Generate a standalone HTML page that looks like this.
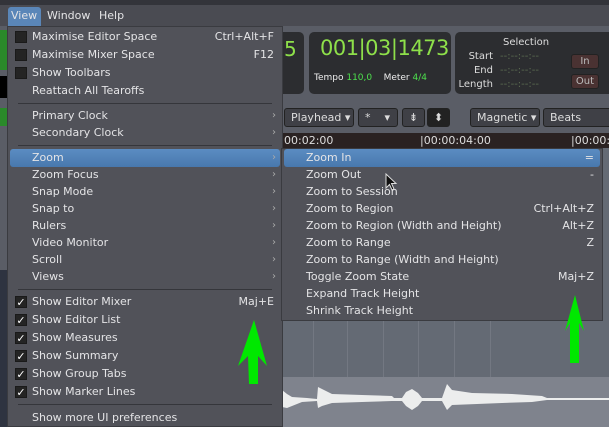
<!DOCTYPE html>
<html><head><meta charset="utf-8"><style>
*{margin:0;padding:0;box-sizing:border-box}
body{width:609px;height:427px;overflow:hidden;background:#5a5d66;font-family:"DejaVu Sans","Liberation Sans",sans-serif;font-size:11px;color:#e4e4e6;position:relative}
.a{position:absolute;white-space:nowrap}
.menu{position:absolute;background:#515259;border:1px solid #3a3b40}
.it{position:absolute;left:0;right:0;height:18px;line-height:18px}
.it .t{position:absolute;left:24px}
.it .k{position:absolute;right:8px}
.it .ar{position:absolute;right:6px;color:#aaa;font-size:10px}
.sep{position:absolute;left:10px;right:10px;height:1px;background:#35363b}
.cb{position:absolute;left:7px;top:3px;width:12px;height:12px;background:#242424;border:1px solid #1a1a1a;color:#fff;font-size:11px;line-height:11px;text-align:center;font-weight:bold}
.hl{background:linear-gradient(#5b8cc2,#4878ad);border-radius:3px}
.btn{position:absolute;height:19px;top:108px;background:#3f4046;border:1px solid #222;border-radius:3px;color:#ddd;line-height:17px;padding-left:6px;font-size:11px}
</style></head><body>
<div class="a" style="left:0;top:0;width:609px;height:5px;background:#33343a"></div>
<div class="a" style="left:0;top:5px;width:609px;height:21px;background:#4a4b52"></div>
<div class="a" style="left:8px;top:7px;width:33px;height:19px;background:#5a86b8;border-radius:3px 3px 0 0"></div>
<div class="a" style="left:11px;top:9px;">View</div>
<div class="a" style="left:47px;top:9px;">Window</div>
<div class="a" style="left:99px;top:9px;">Help</div>
<div class="a" style="left:0;top:30px;width:7px;height:40px;background:#2a8a2a"></div>
<div class="a" style="left:0;top:76px;width:7px;height:22px;background:#000"></div>
<div class="a" style="left:0;top:108px;width:7px;height:18px;background:#2a8a2a"></div>
<div class="a" style="left:0;top:270px;width:7px;height:157px;background:#2e3340"></div>
<div class="a" style="left:282px;top:32px;width:22px;height:62px;background:#2c2d30;border-radius:0 5px 5px 0"></div>
<div class="a" style="left:284px;top:37px;color:#8ee04a;font-size:20px">5</div>
<div class="a" style="left:309px;top:32px;width:142px;height:62px;background:#2c2d30;border-radius:5px"></div>
<div class="a" style="left:320px;top:36px;color:#8ee04a;font-size:21px;letter-spacing:-0.5px">001|03|1473</div>
<div class="a" style="left:314px;top:73px;color:#eee;font-size:9px">Tempo <span style="color:#4de04d">110,0</span>&nbsp;&nbsp;&nbsp; Meter <span style="color:#4de04d">4/4</span></div>
<div class="a" style="left:455px;top:32px;width:154px;height:62px;background:#2c2d30;border-radius:5px 0 0 5px"></div>
<div class="a" style="left:503px;top:37px;font-size:10px;color:#ddd">Selection</div>
<div class="a" style="left:455px;top:50px;font-size:10px;color:#ddd;line-height:14px;text-align:right;width:38px">Start<br>End<br>Length</div>
<div class="a" style="left:500px;top:50px;font-size:10px;color:#5a6a50;line-height:14px">--:--:--:--<br>--:--:--:--<br>--:--:--:--</div>
<div class="a" style="left:571px;top:54px;width:28px;height:15px;background:#4a3232;border:1px solid #222;border-radius:3px;font-size:10px;color:#bbb;text-align:center;line-height:13px">In</div>
<div class="a" style="left:571px;top:74px;width:28px;height:15px;background:#4a3232;border:1px solid #222;border-radius:3px;font-size:10px;color:#bbb;text-align:center;line-height:13px">Out</div>
<div class="btn" style="left:284px;width:70px">Playhead ▾</div>
<div class="btn" style="left:358px;width:40px">* &nbsp;&nbsp;&nbsp;▾</div>
<div class="btn" style="left:402px;width:23px;text-align:center;padding:0">⇟</div>
<div class="btn" style="left:427px;width:23px;text-align:center;padding:0;background:#222">⬍</div>
<div class="btn" style="left:470px;width:70px">Magnetic ▾</div>
<div class="btn" style="left:543px;width:70px">Beats</div>
<div class="a" style="left:282px;top:133px;width:327px;height:15px;background:#2a2222"></div>
<div class="a" style="left:284px;top:134px;font-size:11px;color:#ddd">00:02:00</div>
<div class="a" style="left:420px;top:134px;font-size:11px;color:#ddd">|00:00:04:00</div>
<div class="a" style="left:571px;top:134px;font-size:11px;color:#ddd">|00:00:0</div>
<div class="a" style="left:282px;top:148px;width:327px;height:229px;background:#646a74"></div>
<div class="a" style="left:313px;top:320px;width:1px;height:57px;background:#737882"></div>
<div class="a" style="left:347px;top:320px;width:1px;height:57px;background:#737882"></div>
<div class="a" style="left:383px;top:320px;width:1px;height:57px;background:#737882"></div>
<div class="a" style="left:418px;top:320px;width:1px;height:57px;background:#737882"></div>
<div class="a" style="left:454px;top:320px;width:1px;height:57px;background:#737882"></div>
<div class="a" style="left:490px;top:320px;width:1px;height:57px;background:#737882"></div>
<div class="a" style="left:282px;top:377px;width:327px;height:50px;background:#7f838d"></div>
<svg class="a" style="left:282px;top:380px" width="327" height="47"><path d="M0 10 L5 14 L10 17 L25 18 L35 19 L36 7 L42 10 L50 14 L80 15 L110 16 L112 18 L120 18 L124 12 L130 9 L136 13 L140 18 L150 18 L160 18 L165 4 L170 10 L190 13 L230 14 L260 16 L265 18 L327 18 L327 20 L265 20 L250 22 L220 23 L170 25 L165 30 L160 21 L140 21 L136 26 L130 30 L124 26 L120 21 L110 21 L80 22 L50 23 L40 26 L36 28 L35 21 L20 22 L10 26 L5 28 L0 27 Z" fill="#eceded"/></svg>
<div class="menu" style="left:7px;top:26px;width:276px;height:401px">
 <div class="it" style="top:1px"><div class="cb"></div><span class="t">Maximise Editor Space</span><span class="k">Ctrl+Alt+F</span></div>
 <div class="it" style="top:19px"><div class="cb"></div><span class="t">Maximise Mixer Space</span><span class="k">F12</span></div>
 <div class="it" style="top:37px"><div class="cb"></div><span class="t">Show Toolbars</span></div>
 <div class="it" style="top:55px"><span class="t">Reattach All Tearoffs</span></div>
 <div class="sep" style="top:76px"></div>
 <div class="it" style="top:80px"><span class="t">Primary Clock</span><span class="ar">›</span></div>
 <div class="it" style="top:97px"><span class="t">Secondary Clock</span><span class="ar">›</span></div>
 <div class="sep" style="top:118px"></div>
 <div class="it hl" style="top:122px;left:2px;right:2px"><span class="t" style="left:22px">Zoom</span><span class="ar" style="right:4px">›</span></div>
 <div class="it" style="top:139px"><span class="t">Zoom Focus</span><span class="ar">›</span></div>
 <div class="it" style="top:156px"><span class="t">Snap Mode</span><span class="ar">›</span></div>
 <div class="it" style="top:173px"><span class="t">Snap to</span><span class="ar">›</span></div>
 <div class="it" style="top:190px"><span class="t">Rulers</span><span class="ar">›</span></div>
 <div class="it" style="top:207px"><span class="t">Video Monitor</span><span class="ar">›</span></div>
 <div class="it" style="top:224px"><span class="t">Scroll</span><span class="ar">›</span></div>
 <div class="it" style="top:241px"><span class="t">Views</span><span class="ar">›</span></div>
 <div class="sep" style="top:262px"></div>
 <div class="it" style="top:266px"><div class="cb">✓</div><span class="t">Show Editor Mixer</span><span class="k">Maj+E</span></div>
 <div class="it" style="top:284px"><div class="cb">✓</div><span class="t">Show Editor List</span></div>
 <div class="it" style="top:302px"><div class="cb">✓</div><span class="t">Show Measures</span></div>
 <div class="it" style="top:320px"><div class="cb">✓</div><span class="t">Show Summary</span></div>
 <div class="it" style="top:338px"><div class="cb">✓</div><span class="t">Show Group Tabs</span></div>
 <div class="it" style="top:356px"><div class="cb">✓</div><span class="t">Show Marker Lines</span></div>
 <div class="sep" style="top:377px"></div>
 <div class="it" style="top:382px"><span class="t">Show more UI preferences</span></div>
</div>
<div class="menu" style="left:281px;top:148px;width:322px;height:173px">
 <div class="it hl" style="top:0px;left:2px;right:2px"><span class="t" style="left:22px">Zoom In</span><span class="k" style="right:6px">=</span></div>
 <div class="it" style="top:17px"><span class="t">Zoom Out</span><span class="k">-</span></div>
 <div class="it" style="top:34px"><span class="t">Zoom to Session</span></div>
 <div class="it" style="top:51px"><span class="t">Zoom to Region</span><span class="k">Ctrl+Alt+Z</span></div>
 <div class="it" style="top:68px"><span class="t">Zoom to Region (Width and Height)</span><span class="k">Alt+Z</span></div>
 <div class="it" style="top:85px"><span class="t">Zoom to Range</span><span class="k">Z</span></div>
 <div class="it" style="top:102px"><span class="t">Zoom to Range (Width and Height)</span></div>
 <div class="it" style="top:119px"><span class="t">Toggle Zoom State</span><span class="k">Maj+Z</span></div>
 <div class="it" style="top:136px"><span class="t">Expand Track Height</span></div>
 <div class="it" style="top:153px"><span class="t">Shrink Track Height</span></div>
</div>
<svg class="a" style="left:385px;top:173px" width="14" height="20"><path d="M1 1 L1 15 L4.5 11.5 L7 17 L9 16 L6.5 10.5 L11 10.5 Z" fill="#111" stroke="#ddd" stroke-width="1"/></svg>
<svg class="a" style="left:234px;top:318px" width="36" height="68"><path d="M20 2 L33 48 L24 38 L24 66 L15 66 L14 38 L4 48 Z" fill="#00e800"/></svg>
<svg class="a" style="left:563px;top:293px" width="24" height="72"><path d="M12 2 L21 38 L16 30 L16 70 L7 70 L7 30 L2 38 Z" fill="#00e800"/></svg>
</body></html>
